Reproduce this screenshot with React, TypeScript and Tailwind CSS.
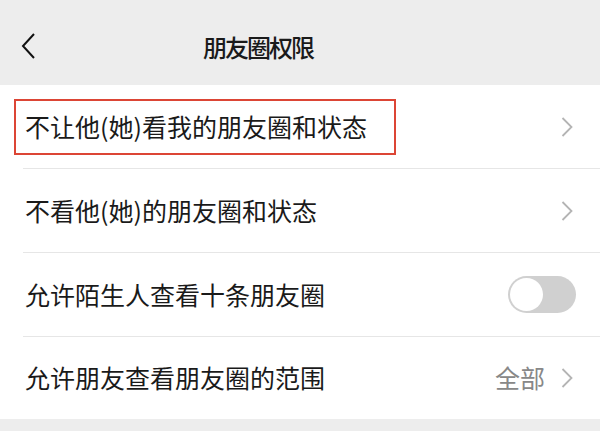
import React from "react";

const font = { fontFamily: '"Noto Sans CJK SC", "Noto Sans", sans-serif' };

function Chevron() {
  return (
    <svg width="12" height="20" viewBox="0 0 12 20" fill="none" className="shrink-0">
      <path d="M1.5 1 L10.5 10 L1.5 19" stroke="#b4b4b4" strokeWidth="1.8" />
    </svg>
  );
}

function Toggle() {
  return (
    <div className="w-[68px] h-[37px] rounded-full bg-[#d0d0d0] p-[2px] flex items-center">
      <div className="w-[33px] h-[33px] rounded-full bg-white" />
    </div>
  );
}

function Divider() {
  return <div className="ml-[23px] h-px bg-[#e6e6e6]" />;
}

export default function App() {
  return (
    <div className="w-[600px] h-[431px] bg-[#ededed] text-[#1a1a1a] overflow-hidden" style={font}>
      <header className="h-[85px] flex items-center pt-[8px]">
        <svg width="16" height="28" viewBox="0 0 16 28" fill="none" className="ml-[21px] -mt-[2px]">
          <path d="M13 2 L2 14 L13 26" stroke="#111" strokeWidth="2" />
        </svg>
        <span className="ml-[166px] text-[24px] tracking-[-2px] font-medium leading-none">朋友圈权限</span>
      </header>

      <div className="bg-white">
        <div className="h-[83px] flex items-center pl-[14px] pr-[27px]">
          <div className="w-[382px] h-[56px] border-2 border-[#dc4535] pl-[9px] flex items-center text-[25px]">
            不让他(她)看我的朋友圈和状态
          </div>
          <div className="ml-auto">
            <Chevron />
          </div>
        </div>
        <Divider />
        <div className="h-[83px] flex items-center pl-[25px] pr-[27px] text-[25px]">
          <span>不看他(她)的朋友圈和状态</span>
          <div className="ml-auto">
            <Chevron />
          </div>
        </div>
        <Divider />
        <div className="h-[83px] flex items-center pl-[25px] pr-[24px] text-[25px]">
          <span>允许陌生人查看十条朋友圈</span>
          <div className="ml-auto">
            <Toggle />
          </div>
        </div>
        <Divider />
        <div className="h-[82px] flex items-center pl-[25px] pr-[27px] text-[25px]">
          <span>允许朋友查看朋友圈的范围</span>
          <span className="ml-auto mr-[16px] text-[#888888]">全部</span>
          <Chevron />
        </div>
      </div>
    </div>
  );
}
